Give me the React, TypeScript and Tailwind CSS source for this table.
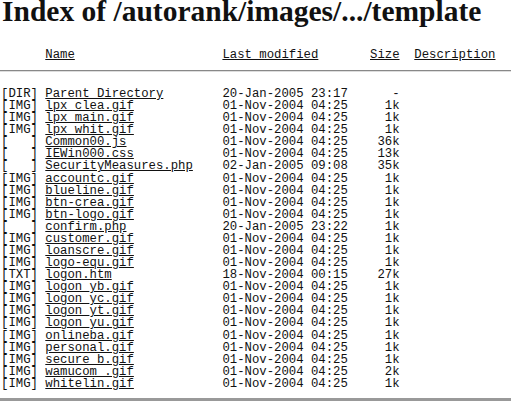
const rows: [string, string, string, string][] = [
  ["[DIR]", "Parent Directory", "20-Jan-2005 23:17", "-"],
  ["[IMG]", "lpx_clea.gif", "01-Nov-2004 04:25", "1k"],
  ["[IMG]", "lpx_main.gif", "01-Nov-2004 04:25", "1k"],
  ["[IMG]", "lpx_whit.gif", "01-Nov-2004 04:25", "1k"],
  ["[   ]", "Common00.js", "01-Nov-2004 04:25", "36k"],
  ["[   ]", "IEWin000.css", "01-Nov-2004 04:25", "13k"],
  ["[   ]", "SecurityMeasures.php", "02-Jan-2005 09:08", "35k"],
  ["[IMG]", "accountc.gif", "01-Nov-2004 04:25", "1k"],
  ["[IMG]", "blueline.gif", "01-Nov-2004 04:25", "1k"],
  ["[IMG]", "btn-crea.gif", "01-Nov-2004 04:25", "1k"],
  ["[IMG]", "btn-logo.gif", "01-Nov-2004 04:25", "1k"],
  ["[   ]", "confirm.php", "20-Jan-2005 23:22", "1k"],
  ["[IMG]", "customer.gif", "01-Nov-2004 04:25", "1k"],
  ["[IMG]", "loanscre.gif", "01-Nov-2004 04:25", "1k"],
  ["[IMG]", "logo-equ.gif", "01-Nov-2004 04:25", "1k"],
  ["[TXT]", "logon.htm", "18-Nov-2004 00:15", "27k"],
  ["[IMG]", "logon_yb.gif", "01-Nov-2004 04:25", "1k"],
  ["[IMG]", "logon_yc.gif", "01-Nov-2004 04:25", "1k"],
  ["[IMG]", "logon_yt.gif", "01-Nov-2004 04:25", "1k"],
  ["[IMG]", "logon_yu.gif", "01-Nov-2004 04:25", "1k"],
  ["[IMG]", "onlineba.gif", "01-Nov-2004 04:25", "1k"],
  ["[IMG]", "personal.gif", "01-Nov-2004 04:25", "1k"],
  ["[IMG]", "secure_b.gif", "01-Nov-2004 04:25", "1k"],
  ["[IMG]", "wamucom_.gif", "01-Nov-2004 04:25", "2k"],
  ["[IMG]", "whitelin.gif", "01-Nov-2004 04:25", "1k"],
];

// one pre line per entry, padded like apache's fancy index
const Row = ({ icon, name, date, size }: { icon: string; name: string; date: string; size: string }) => (
  <div className="whitespace-pre h-[12.08px] leading-[12.08px]">
    {icon} <a className="underline">{name}</a>
    {" ".repeat(24 - name.length)}
    {date}
    {size.padStart(7)}
  </div>
);

export default function App() {
  return (
    <div className="w-[511px] h-[401px] overflow-hidden bg-white text-[#111] flex flex-col">
      <h1 className="font-['Liberation_Serif',serif] font-bold text-[29.5px] leading-[23px] pl-[2px] whitespace-nowrap">
        Index of /autorank/images/.../template
      </h1>
      <div className="font-['Liberation_Mono',monospace] text-[12.3px] pl-[1px]">
        <div className="whitespace-pre h-[12px] leading-[12px] mt-[26px]">
          {"      "}
          <a className="underline">Name</a>
          {" ".repeat(20)}
          <a className="underline">Last modified</a>
          {"       "}
          <a className="underline">Size</a>
          {"  "}
          <a className="underline">Description</a>
        </div>
      </div>
      <div className="mt-[9px] h-[2px] border-t border-[#888] border-b border-b-[#ddd]" />
      <div className="font-['Liberation_Mono',monospace] text-[12.3px] pl-[1px] mt-[16px]">
        {rows.map(([icon, name, date, size]) => (
          <Row key={name} icon={icon} name={name} date={date} size={size} />
        ))}
      </div>
      <div className="mt-auto h-[3px] bg-[#999]" />
    </div>
  );
}
